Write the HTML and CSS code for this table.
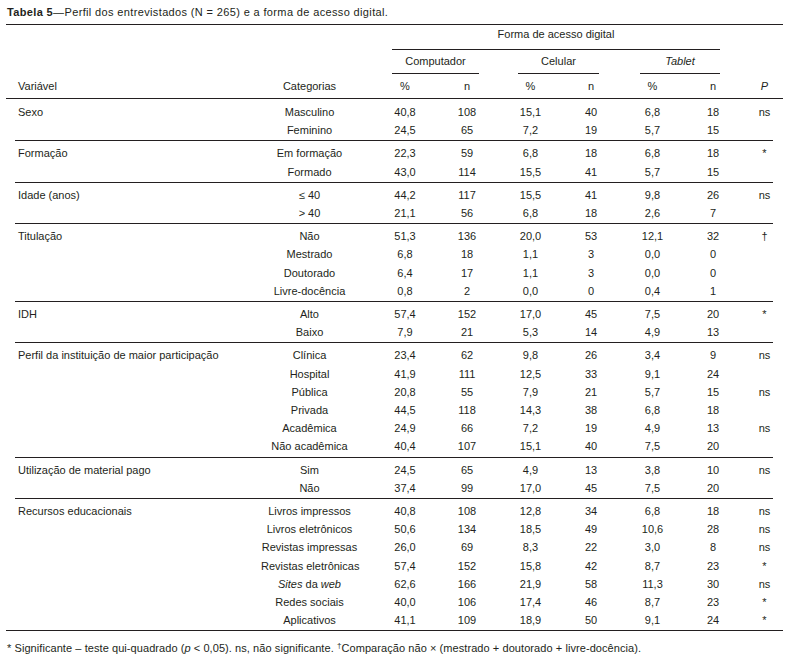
FILE: index.html
```html
<!DOCTYPE html>
<html lang="pt">
<head>
<meta charset="utf-8">
<title>Tabela 5</title>
<link rel="stylesheet" href="styles.css">
</head>
<body>
<div class="page">
  <p class="caption"><b>Tabela 5</b>—Perfil dos entrevistados (N = 265) e a forma de acesso digital.</p>
  <table class="tbl">
    <colgroup>
      <col class="w-spl"><col class="w-var"><col class="w-cat">
      <col class="w-c2"><col class="w-c3"><col class="w-c4"><col class="w-c5"><col class="w-c6"><col class="w-c7">
      <col class="w-p"><col class="w-spr">
    </colgroup>
    <thead>
      <tr class="h1">
        <td class="sp"></td><td></td><td></td>
        <td colspan="6"><div class="span s-forma">Forma de acesso digital</div></td>
        <td></td><td class="sp"></td>
      </tr>
      <tr class="h2">
        <td class="sp"></td><td></td><td></td>
        <td colspan="2"><div class="span s-comp">Computador</div></td>
        <td colspan="2"><div class="span s-cel">Celular</div></td>
        <td colspan="2"><div class="span s-tab"><i>Tablet</i></div></td>
        <td></td><td class="sp"></td>
      </tr>
      <tr class="h3">
        <td class="sp"></td><td class="var">Variável</td><td>Categorias</td>
        <td>%</td><td>n</td><td>%</td><td>n</td><td>%</td><td>n</td>
        <td class="p"><i>P</i></td><td class="sp"></td>
      </tr>
    </thead>
    <tbody class="grp first">
      <tr><td class="sp"></td><td class="var">Sexo</td><td>Masculino</td><td>40,8</td><td>108</td><td>15,1</td><td>40</td><td>6,8</td><td>18</td><td class="p">ns</td><td class="sp"></td></tr>
      <tr><td class="sp"></td><td class="var"></td><td>Feminino</td><td>24,5</td><td>65</td><td>7,2</td><td>19</td><td>5,7</td><td>15</td><td class="p"></td><td class="sp"></td></tr>
    </tbody>
    <tbody class="grp">
      <tr><td class="sp"></td><td class="var">Formação</td><td>Em formação</td><td>22,3</td><td>59</td><td>6,8</td><td>18</td><td>6,8</td><td>18</td><td class="p">*</td><td class="sp"></td></tr>
      <tr><td class="sp"></td><td class="var"></td><td>Formado</td><td>43,0</td><td>114</td><td>15,5</td><td>41</td><td>5,7</td><td>15</td><td class="p"></td><td class="sp"></td></tr>
    </tbody>
    <tbody class="grp">
      <tr><td class="sp"></td><td class="var">Idade (anos)</td><td>≤ 40</td><td>44,2</td><td>117</td><td>15,5</td><td>41</td><td>9,8</td><td>26</td><td class="p">ns</td><td class="sp"></td></tr>
      <tr><td class="sp"></td><td class="var"></td><td>&gt; 40</td><td>21,1</td><td>56</td><td>6,8</td><td>18</td><td>2,6</td><td>7</td><td class="p"></td><td class="sp"></td></tr>
    </tbody>
    <tbody class="grp">
      <tr><td class="sp"></td><td class="var">Titulação</td><td>Não</td><td>51,3</td><td>136</td><td>20,0</td><td>53</td><td>12,1</td><td>32</td><td class="p">†</td><td class="sp"></td></tr>
      <tr><td class="sp"></td><td class="var"></td><td>Mestrado</td><td>6,8</td><td>18</td><td>1,1</td><td>3</td><td>0,0</td><td>0</td><td class="p"></td><td class="sp"></td></tr>
      <tr><td class="sp"></td><td class="var"></td><td>Doutorado</td><td>6,4</td><td>17</td><td>1,1</td><td>3</td><td>0,0</td><td>0</td><td class="p"></td><td class="sp"></td></tr>
      <tr><td class="sp"></td><td class="var"></td><td>Livre-docência</td><td>0,8</td><td>2</td><td>0,0</td><td>0</td><td>0,4</td><td>1</td><td class="p"></td><td class="sp"></td></tr>
    </tbody>
    <tbody class="grp">
      <tr><td class="sp"></td><td class="var">IDH</td><td>Alto</td><td>57,4</td><td>152</td><td>17,0</td><td>45</td><td>7,5</td><td>20</td><td class="p">*</td><td class="sp"></td></tr>
      <tr><td class="sp"></td><td class="var"></td><td>Baixo</td><td>7,9</td><td>21</td><td>5,3</td><td>14</td><td>4,9</td><td>13</td><td class="p"></td><td class="sp"></td></tr>
    </tbody>
    <tbody class="grp">
      <tr><td class="sp"></td><td class="var">Perfil da instituição de maior participação</td><td>Clínica</td><td>23,4</td><td>62</td><td>9,8</td><td>26</td><td>3,4</td><td>9</td><td class="p">ns</td><td class="sp"></td></tr>
      <tr><td class="sp"></td><td class="var"></td><td>Hospital</td><td>41,9</td><td>111</td><td>12,5</td><td>33</td><td>9,1</td><td>24</td><td class="p"></td><td class="sp"></td></tr>
      <tr><td class="sp"></td><td class="var"></td><td>Pública</td><td>20,8</td><td>55</td><td>7,9</td><td>21</td><td>5,7</td><td>15</td><td class="p">ns</td><td class="sp"></td></tr>
      <tr><td class="sp"></td><td class="var"></td><td>Privada</td><td>44,5</td><td>118</td><td>14,3</td><td>38</td><td>6,8</td><td>18</td><td class="p"></td><td class="sp"></td></tr>
      <tr><td class="sp"></td><td class="var"></td><td>Acadêmica</td><td>24,9</td><td>66</td><td>7,2</td><td>19</td><td>4,9</td><td>13</td><td class="p">ns</td><td class="sp"></td></tr>
      <tr><td class="sp"></td><td class="var"></td><td>Não acadêmica</td><td>40,4</td><td>107</td><td>15,1</td><td>40</td><td>7,5</td><td>20</td><td class="p"></td><td class="sp"></td></tr>
    </tbody>
    <tbody class="grp">
      <tr><td class="sp"></td><td class="var">Utilização de material pago</td><td>Sim</td><td>24,5</td><td>65</td><td>4,9</td><td>13</td><td>3,8</td><td>10</td><td class="p">ns</td><td class="sp"></td></tr>
      <tr><td class="sp"></td><td class="var"></td><td>Não</td><td>37,4</td><td>99</td><td>17,0</td><td>45</td><td>7,5</td><td>20</td><td class="p"></td><td class="sp"></td></tr>
    </tbody>
    <tbody class="grp">
      <tr><td class="sp"></td><td class="var">Recursos educacionais</td><td>Livros impressos</td><td>40,8</td><td>108</td><td>12,8</td><td>34</td><td>6,8</td><td>18</td><td class="p">ns</td><td class="sp"></td></tr>
      <tr><td class="sp"></td><td class="var"></td><td>Livros eletrônicos</td><td>50,6</td><td>134</td><td>18,5</td><td>49</td><td>10,6</td><td>28</td><td class="p">ns</td><td class="sp"></td></tr>
      <tr><td class="sp"></td><td class="var"></td><td>Revistas impressas</td><td>26,0</td><td>69</td><td>8,3</td><td>22</td><td>3,0</td><td>8</td><td class="p">ns</td><td class="sp"></td></tr>
      <tr><td class="sp"></td><td class="var"></td><td>Revistas eletrônicas</td><td>57,4</td><td>152</td><td>15,8</td><td>42</td><td>8,7</td><td>23</td><td class="p">*</td><td class="sp"></td></tr>
      <tr><td class="sp"></td><td class="var"></td><td><i>Sites</i> da <i>web</i></td><td>62,6</td><td>166</td><td>21,9</td><td>58</td><td>11,3</td><td>30</td><td class="p">ns</td><td class="sp"></td></tr>
      <tr><td class="sp"></td><td class="var"></td><td>Redes sociais</td><td>40,0</td><td>106</td><td>17,4</td><td>46</td><td>8,7</td><td>23</td><td class="p">*</td><td class="sp"></td></tr>
      <tr><td class="sp"></td><td class="var"></td><td>Aplicativos</td><td>41,1</td><td>109</td><td>18,9</td><td>50</td><td>9,1</td><td>24</td><td class="p">*</td><td class="sp"></td></tr>
    </tbody>
  </table>
  <p class="note">* Significante – teste qui-quadrado (<i>p</i> &lt; 0,05). ns, não significante. <sup>†</sup>Comparação não × (mestrado + doutorado + livre-docência).</p>
</div>
</body>
</html>
```

FILE: styles.css
```css
html, body {
  margin: 0;
  padding: 0;
  background: #ffffff;
}

body {
  color: #231f20;
  font-family: "Liberation Sans", Arial, sans-serif;
  font-size: 11px;
}

.page {
  width: 777px;
  padding-left: 6px;
}

.caption {
  margin: 0 0 3px 0;
  padding: 3px 0 0 1px;
  line-height: 18px;
  white-space: nowrap;
  letter-spacing: 0.36px;
}

.caption b {
  font-weight: bold;
}

.tbl {
  width: 777px;
  table-layout: fixed;
  border-collapse: separate;
  border-spacing: 0;
  border-top: 1px solid #231f20;
  border-bottom: 1px solid #231f20;
}

.w-spl { width: 9px; }
.w-var { width: 246px; }
.w-cat { width: 97px; }
.w-c2 { width: 94px; }
.w-c3 { width: 30px; }
.w-c4 { width: 97px; }
.w-c5 { width: 24px; }
.w-c6 { width: 99px; }
.w-c7 { width: 22px; }
.w-p { width: 49px; }
.w-spr { width: 10px; }

.tbl td {
  padding: 0;
  line-height: 18.2px;
  text-align: center;
  white-space: nowrap;
  vertical-align: top;
}

.tbl td.var {
  text-align: left;
  padding-left: 3px;
}

.tbl td.p {
  padding-left: 32px;
}

/* header */
.span {
  line-height: 18px;
  border-bottom: 1px solid #231f20;
  text-align: center;
}

.s-forma {
  margin: 0 4px 0 34px;
  padding-bottom: 6px;
}

.h2 .span {
  padding-top: 2px;
  padding-bottom: 3px;
}

.s-comp { margin: 0 3px 0 34px; }
.s-cel { margin: 0 4px 0 36px; }
.s-tab { margin: 0 4px 0 37px; }

.h3 td {
  padding-top: 3px;
  padding-bottom: 3px;
  line-height: 18px;
  border-bottom: 1px solid #231f20;
}

.h3 td.var {
  padding-left: 3px;
}

/* body groups */
.grp tr:first-child td {
  padding-top: 3px;
}

.grp.first tr:first-child td {
  padding-top: 4px;
}

.grp tr:last-child td {
  padding-bottom: 1px;
}

.grp:not(.first) tr:first-child td:not(.sp) {
  border-top: 1px solid #231f20;
}

.note {
  margin: 0;
  padding: 8px 0 0 1px;
  line-height: 18px;
  white-space: nowrap;
  letter-spacing: 0.07px;
}

.note sup {
  font-size: 8px;
  line-height: 0;
  vertical-align: 4px;
}
```
